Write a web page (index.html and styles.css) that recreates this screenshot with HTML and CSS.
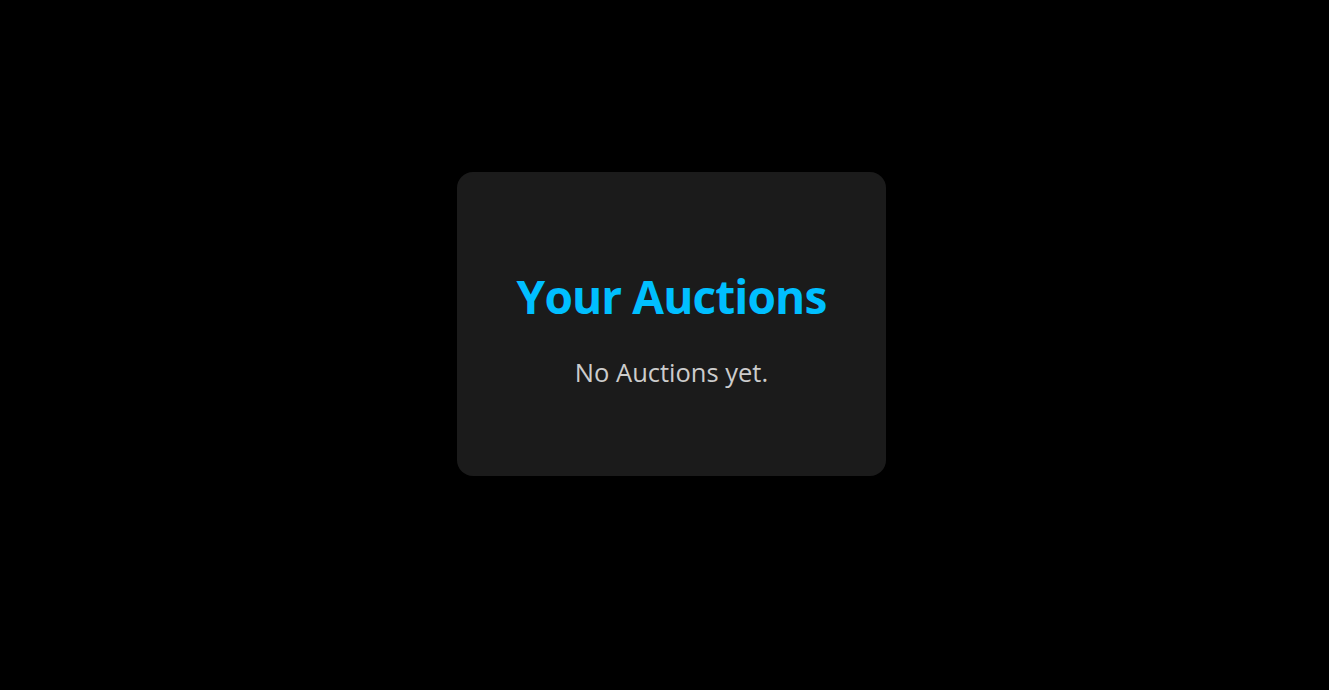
FILE: index.html
```html
<!DOCTYPE html>
<html lang="en">
<head>
<meta charset="utf-8">
<title>Your Auctions</title>
<link rel="stylesheet" href="styles.css">
</head>
<body>
<main class="page">
  <section class="card">
    <h1 class="card-title">Your Auctions</h1>
    <p class="card-text">No Auctions yet.</p>
  </section>
</main>
</body>
</html>
```

FILE: styles.css
```css
html, body {
  margin: 0;
  padding: 0;
  background: #000;
  height: 100%;
}
body {
  font-family: "Open Sans", "Noto Sans", sans-serif;
}
.page {
  box-sizing: border-box;
  min-height: 100%;
  display: flex;
  align-items: flex-start;
  justify-content: center;
  padding: 172px 0 0 14px;
}
.card {
  box-sizing: border-box;
  width: 429px;
  height: 304px;
  padding-top: 10px;
  background: #1b1b1b;
  border-radius: 16px;
  display: flex;
  flex-direction: column;
  align-items: center;
  justify-content: center;
}
.card-title {
  margin: 0;
  color: #00bfff;
  font-size: 46px;
  font-weight: 700;
  line-height: 1.2;
  letter-spacing: -0.9px;
}
.card-text {
  margin: 32px 0 0;
  color: #cccccc;
  font-size: 25.5px;
  line-height: 1.3;
}
```
